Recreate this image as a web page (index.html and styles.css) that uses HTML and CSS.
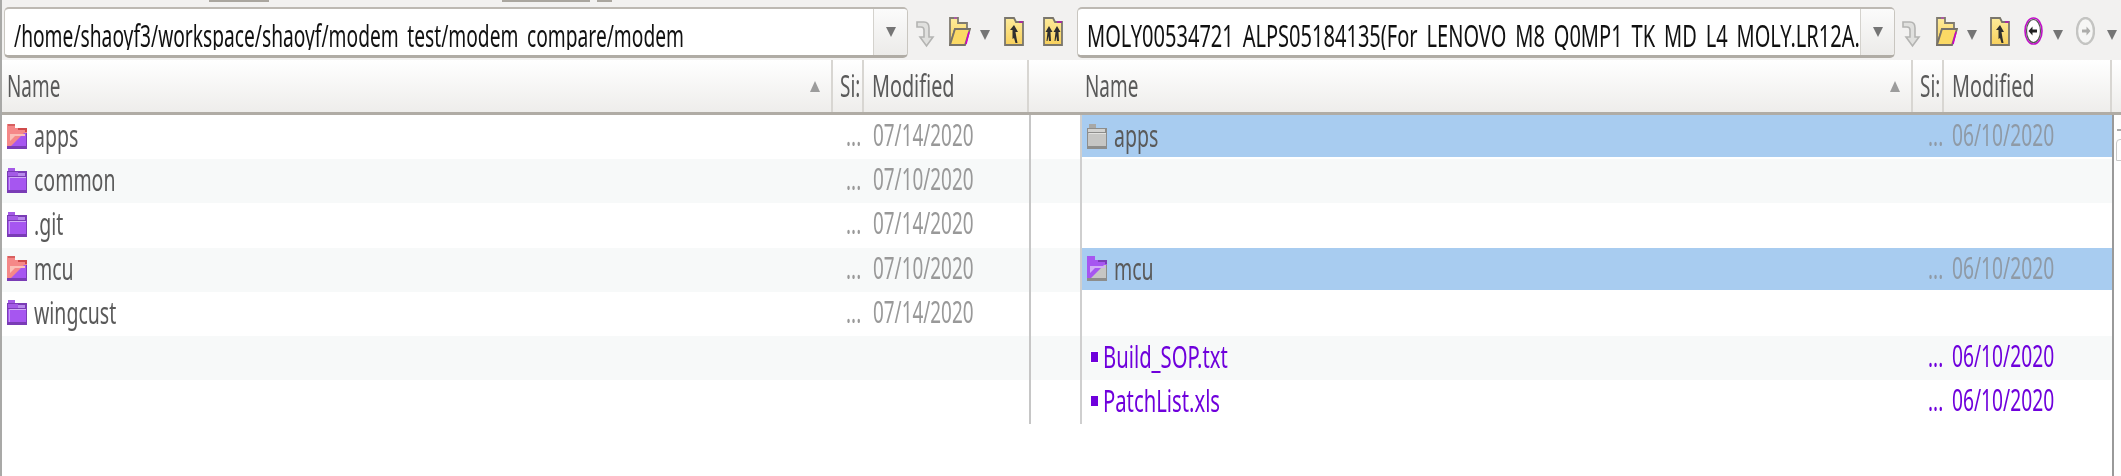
FILE: index.html
```html
<!DOCTYPE html>
<html lang="en">
<head>
    <meta charset="UTF-8">
    <title>Folder Compare</title>
    <link rel="stylesheet" href="styles.css">
</head>
<body>
    <svg class="icon-defs" width="0" height="0">
        <defs>
            <linearGradient id="yellow" x1="0" y1="0" x2="0" y2="1">
                <stop offset="0" stop-color="#fdeb9a"/>
                <stop offset="1" stop-color="#f8d05c"/>
            </linearGradient>
            <symbol id="go" viewBox="0 0 19 28">
                <path d="M1 2h7q5 0 5 6v9h4l-6.500 9L4 17h4v-7q0-3-3-3H1z" fill="#e0e0de" stroke="#b4b4b2" stroke-width="1.600"/>
            </symbol>
            <symbol id="folder-open" viewBox="0 0 22 29" preserveAspectRatio="none">
                <path d="M1 1h8v5h9v6H6L1 28z" fill="url(#yellow)" stroke="#7f7b70" stroke-width="1.800"/>
                <path d="M6 12h15l-5 16H1z" fill="#fbd965" stroke="#777269" stroke-width="1.800"/>
                <path d="M20 15l-3 12" stroke="#d000c8" stroke-width="1.500"/>
                <path d="M5 1h3" stroke="#c44ac0" stroke-width="1.200"/>
            </symbol>
            <symbol id="folder-up" viewBox="0 0 20 29" preserveAspectRatio="none">
                <path d="M1 1h9l2 4h7v23H1z" fill="url(#yellow)" stroke="#7a766c" stroke-width="1.800"/>
                <path d="M15 5h4" stroke="#c000c0" stroke-width="1.200"/>
                <path d="M10 8l4 7h-2.500l1 6 1 5h-2l-1.500-5-1.500 1v-9H6z" fill="#2f2f2f"/>
            </symbol>
            <symbol id="folder-upup" viewBox="0 0 20 29" preserveAspectRatio="none">
                <path d="M1 1h9l2 4h7v23H1z" fill="url(#yellow)" stroke="#7a766c" stroke-width="1.800"/>
                <path d="M14 5h5" stroke="#c000c0" stroke-width="1.200"/>
                <path d="M6 9l3.500 6H7.500l.5 9H6l-.5-5-1 5H3.500l1-9H2.500zM14 9l3.500 6h-2l.5 9h-2l-.5-5-1 5h-1l1-9h-2z" fill="#2f2f2f"/>
            </symbol>
            <symbol id="back" viewBox="0 0 19 28" preserveAspectRatio="none">
                <ellipse cx="9.500" cy="14" rx="8.500" ry="13" fill="#fff" stroke="#c010c8" stroke-width="1.600"/>
                <ellipse cx="9.500" cy="14" rx="7" ry="11.500" fill="none" stroke="#555" stroke-width="1.200"/>
                <path d="M4.500 14l4-4.500v3h4.500v3H8.500v3z" fill="#222"/>
            </symbol>
            <symbol id="forward" viewBox="0 0 19 28" preserveAspectRatio="none">
                <ellipse cx="9.500" cy="14" rx="8.500" ry="13" fill="#f6f6f5" stroke="#c4c4c2" stroke-width="2.400"/>
                <path d="M14.500 14l-4-4.500v3H6v3h4.500v3z" fill="#adadab"/>
            </symbol>
            <symbol id="folder-purple" viewBox="0 0 20 25" preserveAspectRatio="none" shape-rendering="crispEdges">
                <rect x="1" y="0" width="7" height="5" fill="#a45ae6"/>
                <rect x="0" y="3" width="20" height="22" fill="#7a3cb6"/>
                <rect x="1" y="4" width="10" height="4" fill="#a45ae6"/>
                <rect x="11" y="5" width="7" height="3" fill="#b98aec"/>
                <rect x="1" y="9" width="18" height="13" fill="#a656f0"/>
                <rect x="2" y="9" width="17" height="1" fill="#d2aef6"/>
                <rect x="2" y="9" width="1" height="13" fill="#c49af4"/>
            </symbol>
            <symbol id="folder-red" viewBox="0 0 20 25" preserveAspectRatio="none">
                <rect x="0" y="4" width="20" height="21" fill="#7a3cb6"/>
                <rect x="1" y="9" width="18" height="13" fill="#a656f0"/>
                <path d="M0 0h8v4h12v5H17L4 22H0z" fill="#f58888"/>
                <path d="M1 0h7v2H1z" fill="#d86060"/>
                <path d="M11 4h9v4h-2V6h-7z" fill="#cf4a4a"/>
                <path d="M3 10h15v2H8l-5 5z" fill="#fbc0b8"/>
            </symbol>
            <symbol id="folder-gray" viewBox="0 0 20 25" preserveAspectRatio="none" shape-rendering="crispEdges">
                <rect x="2" y="0" width="7" height="5" fill="#a8a8a6"/>
                <rect x="0" y="4" width="20" height="21" fill="#8d8d8b"/>
                <rect x="1" y="5" width="17" height="3" fill="#d2d2d0"/>
                <rect x="1" y="9" width="18" height="13" fill="#c6c6c4"/>
                <rect x="2" y="9" width="17" height="1" fill="#e2e2e0"/>
            </symbol>
            <symbol id="folder-mixed" viewBox="0 0 20 25" preserveAspectRatio="none">
                <rect x="0" y="4" width="20" height="21" fill="#8d8d8b"/>
                <rect x="1" y="9" width="18" height="13" fill="#c6c6c4"/>
                <path d="M0 0h8v4h12v5H17L4 22H0z" fill="#a656f0"/>
                <path d="M11 4h9v4h-2V6h-7z" fill="#7a3cb6"/>
                <path d="M3 10h15v2H8l-5 5z" fill="#d2aef6"/>
            </symbol>
        </defs>
    </svg>

    <div class="page">
        <div class="top-strip">
            <span class="chip chip-a"></span>
            <span class="chip chip-b"></span>
            <span class="chip chip-c"></span>
        </div>

        <div class="toolbars">
            <div class="toolbar toolbar-left">
                <div class="combo combo-left">
                    <div class="combo-field"><span class="txt">/home/shaoyf3/workspace/shaoyf/modem_test/modem_compare/modem</span></div>
                    <div class="combo-btn"><span class="caret"></span></div>
                </div>
                <svg class="tool tool-go l-go"><use href="#go"/></svg>
                <svg class="tool tool-open l-open"><use href="#folder-open"/></svg>
                <span class="caret l-caret"></span>
                <svg class="tool tool-up l-up"><use href="#folder-up"/></svg>
                <svg class="tool tool-up l-upup"><use href="#folder-upup"/></svg>
            </div>
            <div class="toolbar toolbar-right">
                <div class="combo combo-right">
                    <div class="combo-field"><span class="txt">MOLY00534721_ALPS05184135(For_LENOVO_M8_Q0MP1_TK_MD_L4_MOLY.LR12A.P</span></div>
                    <div class="combo-btn"><span class="caret"></span></div>
                </div>
                <svg class="tool tool-go r-go"><use href="#go"/></svg>
                <svg class="tool tool-open r-open"><use href="#folder-open"/></svg>
                <span class="caret l-caret"></span>
                <svg class="tool tool-up r-up"><use href="#folder-up"/></svg>
                <svg class="tool tool-nav r-back"><use href="#back"/></svg>
                <span class="caret r-caret1"></span>
                <svg class="tool tool-nav r-fwd"><use href="#forward"/></svg>
                <span class="caret r-caret2"></span>
            </div>
        </div>

        <div class="panes">
            <div class="pane pane-left">
                <div class="cols header">
                    <div class="head-cell"><span class="txt">Name</span><span class="sort"></span></div>
                    <div class="head-cell head-size"><span class="txt">Si:</span></div>
                    <div class="head-cell head-date"><span class="txt">Modified</span></div>
                    <div class="head-cell"></div>
                </div>
                <div class="list">
                    <div class="cols row">
                        <div class="name"><svg class="ficon"><use href="#folder-red"/></svg><span class="txt">apps</span></div>
                        <div class="size"><span class="txt">...</span></div>
                        <div class="date"><span class="txt">07/14/2020</span></div>
                        <div class="gutter"></div>
                    </div>
                    <div class="cols row alt">
                        <div class="name"><svg class="ficon"><use href="#folder-purple"/></svg><span class="txt">common</span></div>
                        <div class="size"><span class="txt">...</span></div>
                        <div class="date"><span class="txt">07/10/2020</span></div>
                        <div class="gutter"></div>
                    </div>
                    <div class="cols row">
                        <div class="name"><svg class="ficon"><use href="#folder-purple"/></svg><span class="txt">.git</span></div>
                        <div class="size"><span class="txt">...</span></div>
                        <div class="date"><span class="txt">07/14/2020</span></div>
                        <div class="gutter"></div>
                    </div>
                    <div class="cols row alt">
                        <div class="name"><svg class="ficon"><use href="#folder-red"/></svg><span class="txt">mcu</span></div>
                        <div class="size"><span class="txt">...</span></div>
                        <div class="date"><span class="txt">07/10/2020</span></div>
                        <div class="gutter"></div>
                    </div>
                    <div class="cols row">
                        <div class="name"><svg class="ficon"><use href="#folder-purple"/></svg><span class="txt">wingcust</span></div>
                        <div class="size"><span class="txt">...</span></div>
                        <div class="date"><span class="txt">07/14/2020</span></div>
                        <div class="gutter"></div>
                    </div>
                    <div class="cols row alt">
                        <div class="name"></div><div class="size"></div><div class="date"></div><div class="gutter"></div>
                    </div>
                    <div class="cols row">
                        <div class="name"></div><div class="size"></div><div class="date"></div><div class="gutter"></div>
                    </div>
                </div>
            </div>

            <div class="pane pane-right">
                <div class="cols header">
                    <div class="head-cell"><span class="txt">Name</span><span class="sort"></span></div>
                    <div class="head-cell head-size"><span class="txt">Si:</span></div>
                    <div class="head-cell head-date"><span class="txt">Modified</span></div>
                    <div class="head-cell"></div>
                </div>
                <div class="list-wrap">
                    <div class="list">
                        <div class="cols row selected">
                            <div class="name"><svg class="ficon"><use href="#folder-gray"/></svg><span class="txt">apps</span></div>
                            <div class="size"><span class="txt">...</span></div>
                            <div class="date"><span class="txt">06/10/2020</span></div>
                        </div>
                        <div class="cols row alt"></div>
                        <div class="cols row"></div>
                        <div class="cols row selected">
                            <div class="name"><svg class="ficon"><use href="#folder-mixed"/></svg><span class="txt">mcu</span></div>
                            <div class="size"><span class="txt">...</span></div>
                            <div class="date"><span class="txt">06/10/2020</span></div>
                        </div>
                        <div class="cols row"></div>
                        <div class="cols row alt only">
                            <div class="name file"><span class="bullet"></span><span class="txt">Build_SOP.txt</span></div>
                            <div class="size"><span class="txt">...</span></div>
                            <div class="date"><span class="txt">06/10/2020</span></div>
                        </div>
                        <div class="cols row only">
                            <div class="name file"><span class="bullet"></span><span class="txt">PatchList.xls</span></div>
                            <div class="size"><span class="txt">...</span></div>
                            <div class="date"><span class="txt">06/10/2020</span></div>
                        </div>
                    </div>
                    <div class="scrollbar"><span class="scroll-arrow"></span><span class="scroll-thumb"></span></div>
                </div>
            </div>
        </div>
    </div>
</body>
</html>
```

FILE: styles.css
```css
body {
    margin: 0;
    background: #fff;
    font-family: "Noto Sans", sans-serif;
    overflow: hidden;
}
.icon-defs {
    position: absolute;
}
.page {
    display: flex;
    flex-direction: column;
    height: 100vh;
    border-left: 2px solid #a9a9a7;
    box-sizing: border-box;
    overflow: hidden;
}
.txt {
    display: inline-block;
    font-size: 30px;
    line-height: 40px;
    white-space: pre;
    transform: scaleX(0.63);
    transform-origin: left center;
    filter: blur(0.3px);
}

/* top */
.top-strip {
    display: flex;
    flex: none;
    height: 5px;
    background: #f2f1f0;
}
.chip {
    height: 2px;
    background: #aaa69f;
}
.chip-a { width: 60px; margin-left: 207px; }
.chip-b { width: 88px; margin-left: 233px; }
.chip-c { width: 15px; margin-left: 7px; }
.toolbars {
    display: flex;
    flex: none;
    height: 55px;
    background: #f2f1f0;
}
.toolbar {
    display: flex;
    align-items: flex-start;
    padding-top: 2px;
}
.toolbar-left {
    width: 1075px;
    padding-left: 2px;
    box-sizing: border-box;
}
.toolbar-right {
    flex: 1;
}
.combo {
    display: flex;
    height: 51px;
    box-sizing: border-box;
    border: 1px solid #c9c6c0;
    border-bottom: 3px solid #b0aca5;
    border-top: 2px solid #bdb9b3;
    border-radius: 5px;
    background: #fff;
    overflow: hidden;
}
.combo-left { width: 904px; }
.combo-right { width: 818px; }
/* the field is short on purpose: it cuts the descenders and the underscores */
.combo-field {
    flex: 1;
    height: 31px;
    margin-top: 10px;
    padding-left: 9px;
    color: #111;
    overflow: hidden;
}
.combo-field .txt {
    margin-top: -3px;
}
.combo-left .txt {
    transform: scaleX(0.64);
}
.combo-right .txt {
    transform: scaleX(0.668);
}
.combo-btn {
    display: flex;
    align-items: center;
    justify-content: center;
    width: 33px;
    border-left: 1px solid #d4d2cd;
    background: linear-gradient(#fbfbfb, #ecebe9);
}
.caret {
    width: 0;
    height: 0;
    border-left: 5px solid transparent;
    border-right: 5px solid transparent;
    border-top: 10px solid #757575;
}
.tool { display: block; }
.tool-go { width: 19px; height: 28px; margin-top: 13px; }
.tool-open { width: 22px; height: 29px; margin-top: 10px; }
.tool-up { width: 20px; height: 29px; margin-top: 10px; }
.tool-nav { width: 19px; height: 28px; margin-top: 10px; }
.l-go { margin-left: 8px; }
.l-open { margin-left: 14px; }
.l-caret { margin: 23px 0 0 9px; }
.l-up { margin-left: 14px; }
.l-upup { margin-left: 19px; }
.r-go { margin-left: 7px; }
.r-open { margin-left: 15px; }
.r-up { margin-left: 13px; }
.r-back { margin-left: 14px; }
.r-caret1 { margin: 23px 0 0 10px; }
.r-fwd { margin-left: 13px; }
.r-caret2 { margin: 23px 0 0 12px; }

/* panes */
.panes {
    display: flex;
    flex: 1;
    min-height: 0;
}
.pane {
    display: flex;
    flex-direction: column;
}
.pane-left {
    width: 1078px;
}
.pane-right {
    flex: 1;
}
.cols {
    display: grid;
}
.pane-left .cols {
    grid-template-columns: 831px 31px 165px 51px;
}
.pane-right .cols {
    grid-template-columns: 833px 31px 1fr;
}
.pane-right .header {
    grid-template-columns: 833px 31px 168px 1fr;
}
.header {
    flex: none;
    height: 52px;
    box-sizing: content-box;
    border-bottom: 3px solid #b0aca5;
    background: linear-gradient(#fff, #eeedeb);
    color: #5a5a5a;
}
.head-cell {
    display: flex;
    align-items: center;
    justify-content: space-between;
    padding-left: 5px;
    border-right: 2px solid #d8d6d2;
    box-sizing: border-box;
    overflow: hidden;
}
.head-cell:last-child {
    border-right: none;
}
.head-size {
    padding-left: 7px;
}
.head-date {
    padding-left: 8px;
}
.head-date .txt {
    transform: scaleX(0.66);
}
.sort {
    width: 0;
    height: 0;
    margin-right: 11px;
    border-left: 5px solid transparent;
    border-right: 5px solid transparent;
    border-bottom: 11px solid #9c9c9c;
}
.list-wrap {
    display: flex;
    flex: 1;
    min-height: 0;
}
.list-wrap .list {
    flex: 1;
}
.row {
    height: 44.200px;
    box-sizing: border-box;
    color: #5a5a5a;
}
.alt {
    background: #f7f9f9;
}
.pane-right .row {
    border-left: 2px solid #cfcfcf;
}
.selected {
    background: linear-gradient(#a8ccf0, #a8ccf0 42px, #fff 42px);
}
.only {
    color: #6f00dc;
}
.name {
    display: flex;
    align-items: center;
    padding-left: 5px;
    overflow: hidden;
}
.name .txt {
    transform: scaleX(0.65);
}
.file {
    padding-left: 8px;
}
.file .txt {
    transform: scaleX(0.675);
}
.ficon {
    flex: none;
    width: 20px;
    height: 25px;
    margin-right: 7px;
}
.bullet {
    flex: none;
    width: 7px;
    height: 10px;
    margin: 0 5px 0 1px;
    background: #6f00dc;
    box-shadow: 0 0 0 1px #fff;
}
.size {
    padding-left: 13px;
    overflow: hidden;
}
.row > .date {
    padding-left: 9px;
    color: #999;
}
.pane-right .row > .date {
    padding-left: 6px;
}
.pane-right .date .txt {
    transform: scaleX(0.64);
}
.row > .size {
    color: #999;
}
.selected > .date, .selected > .size {
    color: #8f9aa6;
}
.only > .date, .only > .size {
    color: #6f00dc;
}
.name, .size, .date {
    height: 42px;
}
.gutter {
    border-left: 2px solid #c6c6c6;
}
.scrollbar {
    position: relative;
    flex: none;
    width: 11px;
    border-left: 2px solid #999;
    background: #fefefe;
}
.scroll-arrow {
    position: absolute;
    top: 14px;
    left: 3px;
    width: 6px;
    height: 4px;
    border-top: 2px solid #aaa;
}
.scroll-thumb {
    position: absolute;
    top: 24px;
    left: 2px;
    width: 8px;
    height: 20px;
    border: 1px solid #c8c8c8;
    border-radius: 4px 4px 0 0;
}
```
